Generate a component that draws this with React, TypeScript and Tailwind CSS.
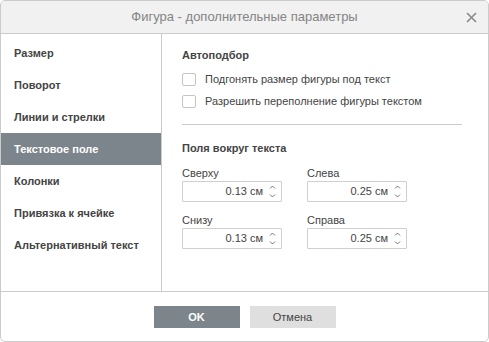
import { useState } from "react";

const tabs = [
  "Размер",
  "Поворот",
  "Линии и стрелки",
  "Текстовое поле",
  "Колонки",
  "Привязка к ячейке",
  "Альтернативный текст",
];

const Checkbox = ({ label }: { label: string }) => {
  const [checked, setChecked] = useState(false);
  return (
    <label className="flex items-center h-[13px] cursor-pointer">
      <span
        onClick={() => setChecked(!checked)}
        className="w-[14px] h-[13px] border border-[#c4c4c4] rounded-[2px] bg-white shrink-0"
      />
      <span className="ml-[9px] leading-[13px]">{label}</span>
    </label>
  );
};

const SpinInput = ({ label, value }: { label: string; value: string }) => (
  <div className="flex flex-col">
    <div className="h-[14px] leading-[14px]">{label}</div>
    <div className="mt-[1px] h-[21px] w-[100px] border border-[#cfcfcf] rounded-[1px] flex items-center justify-end relative">
      <span className="pr-[18px] leading-[19px]">{value}</span>
      <svg
        className="absolute right-[5px] top-[2px]"
        width="7"
        height="15"
        viewBox="0 0 7 15"
        fill="none"
        stroke="#777"
        strokeWidth="1"
      >
        <path d="M1 4.5 L3.5 2 L6 4.5" />
        <path d="M1 10.5 L3.5 13 L6 10.5" />
      </svg>
    </div>
  </div>
);

export default function App() {
  const [active, setActive] = useState(3);

  return (
    <div
      className="w-[489px] h-[342px] bg-white border border-[#cbcbcb] rounded-[5px] overflow-hidden flex flex-col text-[11px] text-[#444]"
      style={{ fontFamily: '"Liberation Sans", Arial, sans-serif' }}
    >
      <div className="h-[33px] shrink-0 bg-[#f1f1f1] border-b border-[#cbcbcb] flex items-center justify-center relative">
        <span className="text-[13px] text-[#848484]">
          Фигура - дополнительные параметры
        </span>
        <svg
          className="absolute right-[11px] top-[11px]"
          width="11"
          height="11"
          viewBox="0 0 11 11"
          stroke="#8a8a8a"
          strokeWidth="1.6"
        >
          <path d="M1 1 L10 10 M10 1 L1 10" />
        </svg>
      </div>

      <div className="flex h-[258px] shrink-0 border-b border-[#cbcbcb]">
        <div className="w-[161px] shrink-0 border-r border-[#cbcbcb] pt-[3px]">
          {tabs.map((tab, i) => (
            <div
              key={tab}
              onClick={() => setActive(i)}
              className={
                i === active
                  ? "h-[32px] pl-[13px] flex items-center font-bold bg-[#7d858c] text-white"
                  : "h-[32px] pl-[13px] flex items-center font-bold cursor-pointer"
              }
            >
              {tab}
            </div>
          ))}
        </div>

        <div className="flex-1 pl-[20px] pr-[26px] pt-[14px]">
          <div className="h-[14px] leading-[14px] font-bold">Автоподбор</div>
          <div className="mt-[11px] flex flex-col gap-[9px]">
            <Checkbox label="Подгонять размер фигуры под текст" />
            <Checkbox label="Разрешить переполнение фигуры текстом" />
          </div>
          <div className="mt-[16px] h-px bg-[#cbcbcb]" />
          <div className="mt-[16px] h-[14px] leading-[14px] font-bold">
            Поля вокруг текста
          </div>
          <div className="mt-[11px] grid grid-cols-[100px_100px] gap-x-[25px] gap-y-[11px]">
            <SpinInput label="Сверху" value="0.13 см" />
            <SpinInput label="Слева" value="0.25 см" />
            <SpinInput label="Снизу" value="0.13 см" />
            <SpinInput label="Справа" value="0.25 см" />
          </div>
        </div>
      </div>

      <div className="flex justify-center gap-[10px] pt-[14px]">
        <button className="w-[86px] h-[22px] bg-[#7d858c] text-white font-bold text-[11px]">
          OK
        </button>
        <button className="w-[86px] h-[22px] bg-[#dfdfdf] text-[#444] text-[11px]">
          Отмена
        </button>
      </div>
    </div>
  );
}
